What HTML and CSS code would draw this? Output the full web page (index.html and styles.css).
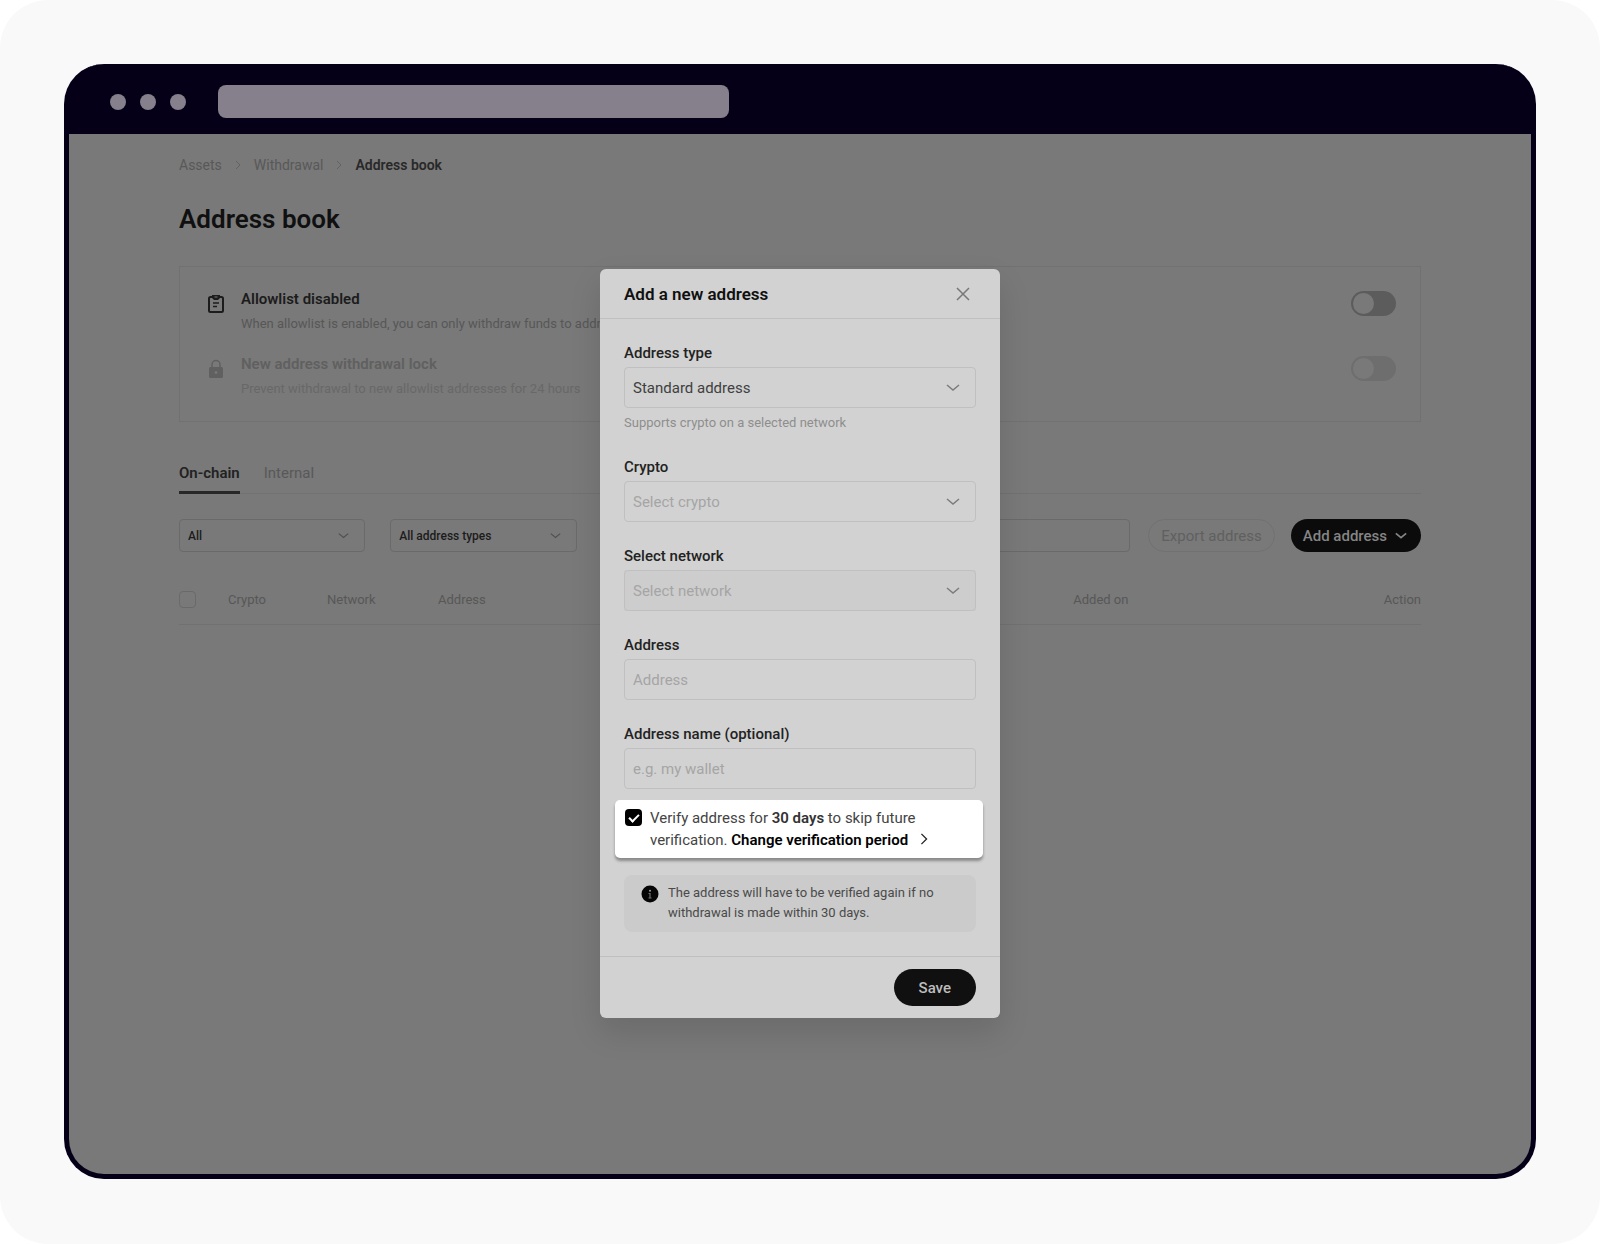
FILE: index.html
```html
<!DOCTYPE html>
<html lang="en">
<head>
  <meta charset="UTF-8">
  <meta name="viewport" content="width=device-width, initial-scale=1">
  <title>Address book</title>
  <link rel="stylesheet" href="styles.css">
</head>
<body>
  <div class="stage">
    <div class="browser">
      <div class="browser-bar">
        <span class="dot"></span>
        <span class="dot"></span>
        <span class="dot"></span>
        <div class="url-bar"></div>
      </div>

      <div class="viewport">
        <main class="page">
          <nav class="breadcrumb" aria-label="Breadcrumb">
            <a href="#">Assets</a>
            <svg class="crumb-arrow" viewBox="0 0 6 10"><path d="M1 1l4 4-4 4"/></svg>
            <a href="#">Withdrawal</a>
            <svg class="crumb-arrow" viewBox="0 0 6 10"><path d="M1 1l4 4-4 4"/></svg>
            <a href="#" class="current">Address book</a>
          </nav>

          <h1>Address book</h1>

          <section class="settings">
            <div class="setting">
              <svg class="setting-icon" viewBox="0 0 18 20">
                <rect x="2" y="3" width="14" height="15" rx="1.5" fill="none" stroke="currentColor" stroke-width="2"/>
                <path d="M5 1h8v3l-2 2H7L5 4z" fill="currentColor"/>
                <path d="M7.500 3h3" stroke="#797979" stroke-width="1"/>
                <path d="M6 9h6M6 12.500h4" stroke="currentColor" stroke-width="1.500"/>
              </svg>
              <div class="setting-text">
                <label for="allowlist">Allowlist disabled</label>
                <p>When allowlist is enabled, you can only withdraw funds to addresses</p>
              </div>
              <input type="checkbox" class="toggle" id="allowlist">
            </div>
            <div class="setting locked">
              <svg class="setting-icon" viewBox="0 0 18 20">
                <path d="M5 9V5.500a4 4 0 0 1 8 0V9" fill="none" stroke="currentColor" stroke-width="1.500"/>
                <rect x="2" y="8" width="14" height="11" rx="1.500" fill="currentColor"/>
                <circle cx="9" cy="13.500" r="1.300" fill="#797979"/>
              </svg>
              <div class="setting-text">
                <label for="lock">New address withdrawal lock</label>
                <p>Prevent withdrawal to new allowlist addresses for 24 hours</p>
              </div>
              <input type="checkbox" class="toggle" id="lock" disabled>
            </div>
          </section>

          <div class="tabs">
            <button class="tab active">On-chain</button>
            <button class="tab">Internal</button>
          </div>

          <div class="filters">
            <div class="select-box small">
              <select aria-label="Crypto filter"><option>All</option></select>
              <svg class="chevron" viewBox="0 0 14 8"><path d="M1 1l6 5 6-5"/></svg>
            </div>
            <div class="select-box small">
              <select aria-label="Address type filter"><option>All address types</option></select>
              <svg class="chevron" viewBox="0 0 14 8"><path d="M1 1l6 5 6-5"/></svg>
            </div>
            <input type="text" class="search" aria-label="Search">
            <button class="btn-export" disabled>Export address</button>
            <button class="btn-add">Add address
              <svg class="chevron" viewBox="0 0 14 8"><path d="M1 1l6 5 6-5"/></svg>
            </button>
          </div>

          <table class="addresses">
            <thead>
              <tr>
                <th class="col-check"><input type="checkbox" class="row-check" aria-label="Select all"></th>
                <th class="col-crypto">Crypto</th>
                <th class="col-network">Network</th>
                <th>Address</th>
                <th class="col-added">Added on</th>
                <th class="col-action">Action</th>
              </tr>
            </thead>
          </table>
        </main>

        <div class="overlay">
          <form class="modal" role="dialog" aria-labelledby="modal-title">
            <header class="modal-header">
              <h2 id="modal-title">Add a new address</h2>
              <button type="button" class="close" aria-label="Close">
                <svg viewBox="0 0 14 14"><path d="M1 1l12 12M13 1L1 13"/></svg>
              </button>
            </header>

            <div class="modal-body">
              <div class="field">
                <label for="type">Address type</label>
                <div class="select-box">
                  <select id="type"><option>Standard address</option></select>
                  <svg class="chevron" viewBox="0 0 14 8"><path d="M1 1l6 5 6-5"/></svg>
                </div>
                <p class="hint">Supports crypto on a selected network</p>
              </div>
              <div class="field">
                <label for="crypto">Crypto</label>
                <div class="select-box empty">
                  <select id="crypto"><option>Select crypto</option></select>
                  <svg class="chevron" viewBox="0 0 14 8"><path d="M1 1l6 5 6-5"/></svg>
                </div>
              </div>
              <div class="field">
                <label for="network">Select network</label>
                <div class="select-box empty off">
                  <select id="network" disabled><option>Select network</option></select>
                  <svg class="chevron" viewBox="0 0 14 8"><path d="M1 1l6 5 6-5"/></svg>
                </div>
              </div>
              <div class="field">
                <label for="address">Address</label>
                <input type="text" id="address" placeholder="Address">
              </div>
              <div class="field">
                <label for="name">Address name (optional)</label>
                <input type="text" id="name" placeholder="e.g. my wallet">
              </div>

              <div class="verify">
                <input type="checkbox" id="verify" checked>
                <div>
                  <label for="verify">Verify address for <b>30 days</b> to skip future<br>verification.</label>
                  <a href="#">Change verification period
                    <svg viewBox="0 0 8 14"><path d="M1 1l6 6-6 6"/></svg>
                  </a>
                </div>
              </div>

              <div class="notice">
                <svg class="notice-icon" viewBox="0 0 18 18">
                  <circle cx="9" cy="9" r="8.500" fill="#060606"/>
                  <circle cx="9" cy="5.800" r="1" fill="#a0a0a0"/>
                  <path d="M7.500 8.500H9V13M7.500 13h3" fill="none" stroke="#707070" stroke-width="1.200"/>
                </svg>
                <p>The address will have to be verified again if no withdrawal is made within 30 days.</p>
              </div>
            </div>

            <footer class="modal-footer">
              <button type="button" class="btn-save">Save</button>
            </footer>
          </form>
        </div>
      </div>
    </div>
  </div>
</body>
</html>
```
FILE: styles.css
```css
:root {
  --frame: #050017;
  --chrome: #85808c;
  --page-bg: #797979;
  --page-line: #717171;
  --modal-bg: #d2d2d2;
  --modal-line: #c0c0c0;
}

* {
  box-sizing: border-box;
}

body {
  margin: 0;
  background: #ffffff;
  font-family: Roboto, "Noto Sans", sans-serif;
  font-size: 14px;
  line-height: 20px;
}

h1, h2, p {
  margin: 0;
}

a {
  color: inherit;
  text-decoration: none;
}

button, input, select {
  font: inherit;
  color: inherit;
  margin: 0;
}

button {
  border: none;
  background: none;
  padding: 0;
  cursor: pointer;
}

svg {
  flex: none;
}

.stage {
  display: flex;
  min-height: 100vh;
  padding: 64px 64px 65px;
  border-radius: 48px;
  background: #f9f9f9;
}

.browser {
  flex: 1;
  display: flex;
  flex-direction: column;
  border: 5px solid var(--frame);
  border-top: none;
  border-radius: 40px;
  background: var(--frame);
}

.browser-bar {
  display: flex;
  align-items: center;
  gap: 14px;
  height: 70px;
  padding: 5px 41px 0;
}

.dot {
  width: 16px;
  height: 16px;
  border-radius: 50%;
  background: var(--chrome);
}

.url-bar {
  width: 37%;
  height: 33px;
  margin-left: 18px;
  border-radius: 8px;
  background: var(--chrome);
}

/* page behind the dialog */
.viewport {
  position: relative;
  flex: 1;
  border-radius: 0 0 35px 35px;
  background: var(--page-bg);
}

.page {
  padding: 21px 110px;
  color: #1c1c1c;
}

.breadcrumb {
  display: flex;
  align-items: center;
  gap: 13px;
  font-size: 14px;
  color: #585858;
}

.breadcrumb .current {
  color: #282828;
  font-weight: 600;
}

.crumb-arrow {
  width: 6px;
  height: 10px;
  fill: none;
  stroke: #626262;
}

h1 {
  margin-top: 28px;
  font-size: 26px;
  line-height: 32px;
  font-weight: 600;
  color: #101010;
}

.settings {
  display: flex;
  flex-direction: column;
  gap: 20px;
  margin-top: 31px;
  padding: 22px 24px;
  border: 1px solid var(--page-line);
}

.setting {
  display: flex;
  align-items: flex-start;
}

.setting-icon {
  width: 18px;
  height: 20px;
  margin: 5px 16px 0 3px;
}

.setting-text {
  flex: 1;
}

.setting-text label {
  display: block;
  font-size: 15px;
  font-weight: 600;
}

.setting-text p {
  margin-top: 5px;
  font-size: 13px;
  color: #575757;
}

.setting.locked {
  color: #606060;
}

.setting.locked p {
  color: #686868;
}

.toggle {
  appearance: none;
  display: flex;
  width: 45px;
  height: 25px;
  margin-top: 2px;
  padding: 2px;
  border-radius: 13px;
  background: #5c5c5c;
}

.toggle::before {
  content: "";
  width: 21px;
  height: 21px;
  border-radius: 50%;
  background: #797979;
}

.toggle:disabled {
  background: #6e6e6e;
}

.tabs {
  display: flex;
  gap: 24px;
  margin-top: 41px;
  border-bottom: 1px solid var(--page-line);
}

.tab {
  padding-bottom: 8px;
  margin-bottom: -1px;
  border-bottom: 3px solid transparent;
  font-size: 15px;
  color: #585858;
}

.tab.active {
  border-color: #282828;
  color: #222222;
  font-weight: 600;
}

.filters {
  display: flex;
  margin-top: 25px;
}

.select-box {
  position: relative;
  display: flex;
  align-items: center;
}

.select-box select {
  appearance: none;
  width: 100%;
  height: 41px;
  padding: 0 40px 0 8px;
  border: 1px solid var(--modal-line);
  border-radius: 4px;
  background: transparent;
  opacity: 1;
}

.chevron {
  width: 14px;
  height: 8px;
  fill: none;
  stroke: currentColor;
  stroke-width: 2;
}

.select-box .chevron {
  position: absolute;
  right: 16px;
  color: #7c7c7c;
  stroke-width: 1.5;
  pointer-events: none;
}

.select-box.small {
  width: 15%;
  margin-right: 25px;
}

.select-box.small select,
.search {
  height: 33px;
  border: 1px solid #6a6a6a;
  border-radius: 4px;
  background: transparent;
  font-size: 12px;
  font-weight: 500;
}

.select-box.small .chevron {
  width: 11px;
  color: #505050;
}

.search {
  flex: 1;
  min-width: 0;
  padding: 0 8px;
}

.btn-export,
.btn-add {
  height: 33px;
  border-radius: 17px;
  font-size: 15px;
}

.btn-export {
  margin: 0 16px 0 18px;
  padding: 0 12px;
  border: 1px solid var(--page-line);
  color: #606060;
}

.btn-add {
  display: flex;
  align-items: center;
  gap: 8px;
  padding: 0 14px 0 12px;
  background: #0b0b0b;
  color: #858585;
  font-weight: 500;
}

.btn-add .chevron {
  width: 12px;
}

.addresses {
  width: 100%;
  margin-top: 24px;
  table-layout: fixed;
  border-collapse: collapse;
  border-bottom: 1px solid var(--page-line);
}

.addresses th {
  height: 48px;
  padding: 0;
  text-align: left;
  font-size: 13px;
  font-weight: 400;
  color: #575757;
}

.addresses .col-check { width: 49px; }
.addresses .col-crypto { width: 99px; }
.addresses .col-network { width: 111px; }
.addresses .col-added { width: 18%; }

.addresses .col-action {
  width: 10%;
  text-align: right;
}

.row-check {
  appearance: none;
  display: block;
  width: 17px;
  height: 17px;
  border: 1px solid #6a6a6a;
  border-radius: 4px;
}

/* dialog */
.overlay {
  position: absolute;
  inset: 0;
  display: flex;
  justify-content: center;
  align-items: flex-start;
  padding-top: 135px;
}

.modal {
  width: 400px;
  border-radius: 6px;
  background: var(--modal-bg);
  color: #222222;
  box-shadow: 0 14px 32px rgba(0, 0, 0, 0.12);
}

.modal-header {
  display: flex;
  align-items: center;
  justify-content: space-between;
  height: 50px;
  padding: 0 30px 0 24px;
  border-bottom: 1px solid var(--modal-line);
}

.modal-header h2 {
  font-size: 17px;
  line-height: 24px;
  font-weight: 600;
  color: #101010;
}

.close {
  display: flex;
}

.close svg {
  width: 14px;
  height: 14px;
  stroke: #777777;
  stroke-width: 1.5;
}

.modal-body {
  padding: 24px;
}

.field {
  display: flex;
  flex-direction: column;
  margin-bottom: 24px;
}

.field label {
  margin-bottom: 4px;
  font-size: 15px;
  font-weight: 500;
}

.field select,
.field input {
  font-size: 15px;
}

.field .select-box {
  color: #404040;
}

.field .select-box.empty,
.field input::placeholder {
  color: #a5a5a5;
}

.field .off {
  background: #cdcdcd;
}

.field input {
  height: 41px;
  padding: 0 8px;
  border: 1px solid var(--modal-line);
  border-radius: 4px;
  background: transparent;
}

.hint {
  margin-top: 5px;
  font-size: 13px;
  color: #8e8e8e;
}

.verify {
  display: flex;
  gap: 8px;
  margin: -13px -7px 17px -9px;
  padding: 7px 10px;
  border-radius: 5px;
  background: #ffffff;
  box-shadow: 0 3px 3px rgba(0, 0, 0, 0.35);
  font-size: 15px;
  line-height: 22px;
  color: #444444;
}

.verify b {
  font-weight: 600;
  color: #333333;
}

.verify a {
  color: #000000;
  font-weight: 600;
  white-space: nowrap;
}

.verify a svg {
  width: 8px;
  height: 12px;
  margin-left: 8px;
  fill: none;
  stroke: #222222;
  stroke-width: 1.5;
}

.verify input {
  appearance: none;
  flex: none;
  display: flex;
  align-items: center;
  justify-content: center;
  width: 17px;
  height: 17px;
  margin-top: 2px;
  border-radius: 4px;
  background: #000000;
}

.verify input::before {
  content: "";
  width: 8px;
  height: 4px;
  margin-bottom: 2px;
  border-left: 2px solid #ffffff;
  border-bottom: 2px solid #ffffff;
  transform: rotate(-45deg);
}

.notice {
  display: flex;
  gap: 9px;
  padding: 8px 16px 9px 17px;
  border-radius: 8px;
  background: #cbcbcb;
  font-size: 13px;
  color: #4a4a4a;
}

.notice-icon {
  width: 18px;
  height: 18px;
  margin-top: 2px;
}

.modal-footer {
  display: flex;
  justify-content: flex-end;
  padding: 12px 24px;
  border-top: 1px solid var(--modal-line);
}

.btn-save {
  height: 37px;
  padding: 0 25px;
  border-radius: 19px;
  background: #101010;
  color: #bdbdbd;
  font-size: 15px;
  font-weight: 500;
}
```
